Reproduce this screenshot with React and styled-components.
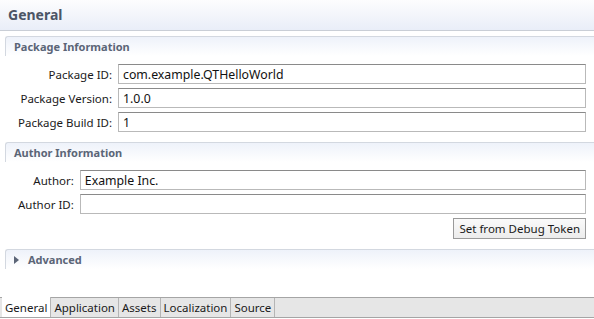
import React from "react";
import styled, { createGlobalStyle } from "styled-components";

const Global = createGlobalStyle`
  html, body { margin: 0; padding: 0; background: #fff; }
  body { font-family: "Noto Sans", "DejaVu Sans", sans-serif; }
  #root { width: 594px; height: 319px; overflow: hidden; }
`;

const Page = styled.div`
  width: 594px;
  height: 319px;
  display: flex;
  flex-direction: column;
  background: #fff;
`;

const Title = styled.div`
  height: 31px;
  box-sizing: border-box;
  padding: 5px 0 0 8px;
  background: linear-gradient(#fdfdfe, #e9eef8);
  border-bottom: 1px solid #c9ced6;
  font-weight: bold;
  font-size: 14px;
  color: #4c5566;
`;

const Body = styled.div`
  flex: 1;
  padding: 5px 0 0 5px;
  display: flex;
  flex-direction: column;
  gap: 10px;
`;

const Section = styled.section`
  display: flex;
  flex-direction: column;
`;

const SectionHead = styled.div`
  height: 20px;
  box-sizing: border-box;
  border-top: 1px solid #d3d8e0;
  border-left: 1px solid #d3d8e0;
  border-top-left-radius: 3px;
  background: linear-gradient(#eef2fa, #ffffff);
  display: flex;
  align-items: center;
  gap: 9px;
  padding-left: 8px;
  font-weight: bold;
  font-size: 11px;
  color: #5b6577;
`;

const Grid = styled.div`
  display: grid;
  grid-template-columns: auto 1fr;
  column-gap: 6px;
  row-gap: 4px;
  align-items: center;
  padding: 8px 8px 0 13px;
`;

const Label = styled.label`
  font-size: 11.5px;
  color: #1a1a1a;
  text-align: right;
  white-space: nowrap;
`;

const Input = styled.input`
  height: 20px;
  box-sizing: border-box;
  margin: 0;
  border: 1px solid #b9b9b9;
  border-top-color: #8a8a8a;
  padding: 0 4px;
  font-family: inherit;
  font-size: 12.3px;
  color: #111;
  outline: none;
`;

const ButtonRow = styled.div`
  grid-column: 1 / span 2;
  display: flex;
  justify-content: flex-end;
`;

const Button = styled.button`
  height: 21px;
  margin: 0;
  padding: 0 5px;
  border: 1px solid #9a9a9a;
  background: linear-gradient(#fafafa, #ececec);
  font-family: inherit;
  font-size: 11.5px;
  color: #1a1a1a;
`;

const Tabs = styled.div`
  margin-top: auto;
  margin-bottom: 1px;
  height: 21px;
  box-sizing: border-box;
  border-top: 1px solid #a5a5a5;
  border-bottom: 1px solid #a5a5a5;
  background: #e6e6e6;
  display: flex;
  padding-left: 2px;
`;

const Tab = styled.div`
  padding: 0 3px;
  display: flex;
  align-items: center;
  font-size: 11.5px;
  color: #1a1a1a;
  border-right: 1px solid #b5b5b5;
  background: ${(p) => (p.$active ? "#fff" : "transparent")};
  margin-top: ${(p) => (p.$active ? "-1px" : "0")};
`;

const Arrow = () => (
  <svg width="5" height="8" viewBox="0 0 5 8">
    <path d="M0 0 L5 4 L0 8 Z" fill="#5b6577" />
  </svg>
);

export default function App() {
  return (
    <Page>
      <Global />
      <Title>General</Title>
      <Body>
        <Section>
          <SectionHead>Package Information</SectionHead>
          <Grid>
            <Label>Package ID:</Label>
            <Input defaultValue="com.example.QTHelloWorld" />
            <Label>Package Version:</Label>
            <Input defaultValue="1.0.0" />
            <Label>Package Build ID:</Label>
            <Input defaultValue="1" />
          </Grid>
        </Section>
        <Section>
          <SectionHead>Author Information</SectionHead>
          <Grid>
            <Label>Author:</Label>
            <Input defaultValue="Example Inc." />
            <Label>Author ID:</Label>
            <Input defaultValue="" />
            <ButtonRow>
              <Button>Set from Debug Token</Button>
            </ButtonRow>
          </Grid>
        </Section>
        <Section>
          <SectionHead>
            <Arrow />
            Advanced
          </SectionHead>
        </Section>
      </Body>
      <Tabs>
        <Tab $active>General</Tab>
        <Tab>Application</Tab>
        <Tab>Assets</Tab>
        <Tab>Localization</Tab>
        <Tab>Source</Tab>
      </Tabs>
    </Page>
  );
}
